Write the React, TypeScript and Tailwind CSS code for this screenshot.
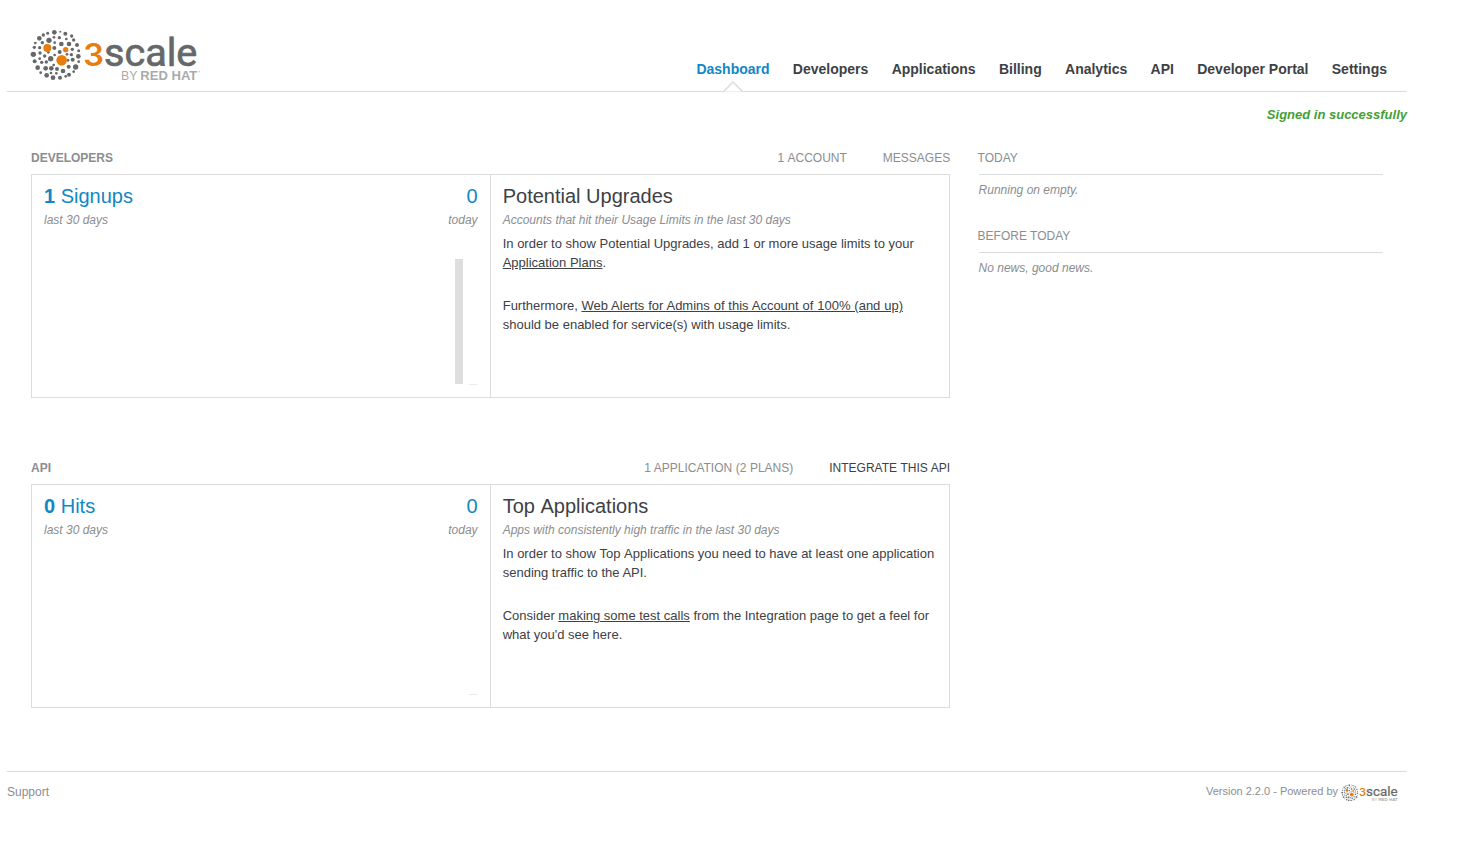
import React from "react";

// Each dot is [cx, cy, radius] in logo units (a third of a pixel).
const grayDots: number[][] = [
  [91, 25, 7], [71, 28, 4.5], [109, 23, 3], [124, 29, 6], [58, 33, 5], [143, 36, 5],
  [46, 43, 7], [90, 40, 4], [106, 41, 5], [127, 45, 4], [75, 49, 8], [149, 48, 5],
  [34, 57, 4], [55, 56, 5], [112, 60, 7], [92, 56, 4], [135, 60, 7], [159, 63, 6],
  [31, 70, 5], [47, 71, 5], [91, 72, 6], [145, 76, 5], [164, 80, 4.5], [48, 87, 5],
  [28, 91, 8], [73, 85, 4], [107, 84, 6], [129, 91, 4], [142, 92, 5], [163, 97, 7],
  [62, 96, 5], [92, 93, 4], [80, 104, 8], [47, 104, 4], [32, 112, 6], [146, 107, 6],
  [132, 109, 4], [53, 115, 5], [67, 114, 5], [164, 113, 4], [155, 129, 8], [134, 128, 6],
  [41, 131, 7], [65, 133, 7], [82, 133, 7], [99, 135, 6], [89, 123, 4], [117, 141, 7],
  [50, 146, 4], [68, 154, 7], [81, 147, 4], [97, 148, 4], [87, 161, 7], [108, 161, 6],
  [125, 157, 4], [135, 152, 6], [149, 143, 4],
];

function Logo({ className }: { className: string }) {
  return (
    <svg className={className} viewBox="18 15 513 159" role="img" aria-label="3scale by Red Hat">
      {grayDots.map(([x, y, r]) => (
        <circle key={`${x}-${y}`} cx={x} cy={y} r={r} fill="#666769" />
      ))}
      <circle cx="70" cy="72" r="12" fill="#e87d0d" />
      <circle cx="125" cy="77" r="8" fill="#e87d0d" />
      <circle cx="113" cy="109" r="16" fill="#e87d0d" />
      <text x="178" y="125" fontFamily="Inter, sans-serif" fontWeight="600" fontSize="92" textLength="62" lengthAdjust="spacingAndGlyphs" fill="#e87d0d">3</text>
      <text x="240" y="125" fontFamily="Roboto, sans-serif" fontWeight="400" fontSize="114" textLength="280" lengthAdjust="spacingAndGlyphs" fill="#666769" stroke="#666769" strokeWidth="2">scale</text>
      <text x="291" y="167" fontFamily="Liberation Sans, sans-serif" fontSize="36" textLength="49" lengthAdjust="spacingAndGlyphs" fill="#aaa">BY</text>
      <text x="349" y="167" fontFamily="Liberation Sans, sans-serif" fontWeight="700" fontSize="36" textLength="171" lengthAdjust="spacingAndGlyphs" fill="#aaa">RED HAT</text>
      <circle cx="526" cy="143" r="2" fill="#bbb" />
    </svg>
  );
}

const navItems = ["Developers", "Applications", "Billing", "Analytics", "API", "Developer Portal", "Settings"];

function Header() {
  return (
    <header className="flex h-[92px] items-start justify-between border-b border-[#dcdcdc] pl-[23px] pr-5">
      <Logo className="mt-[29px] h-[53px] w-[171px]" />
      <nav className="mt-[59px] flex gap-[23.3px] text-[14px] leading-5 font-bold">
        <a className="relative text-[#1287c6]">
          Dashboard
          <svg className="absolute top-[22px] left-1/2 h-[11px] w-5 -translate-x-1/2" viewBox="0 0 20 11">
            <path d="M0.5 10.5 10 1l9.5 9.5" fill="#fff" stroke="#dcdcdc" strokeWidth="1.5" />
          </svg>
        </a>
        {navItems.map((item) => (
          <a key={item}>{item}</a>
        ))}
      </nav>
    </header>
  );
}

interface PanelProps {
  title: string;
  links: React.ReactNode;
  count: string;
  label: string;
  barHeights: number[];
  heading: React.ReactNode;
  subtitle: string;
  children: React.ReactNode;
}

function Panel({ title, links, count, label, barHeights, heading, subtitle, children }: PanelProps) {
  return (
    <section>
      <div className="flex h-[25px] justify-between text-[12px] leading-[18px] text-[#8b8d8f]">
        <h2 className="font-bold">{title}</h2>
        <div className="-mr-[0.2px] flex gap-9">{links}</div>
      </div>
      <div className="flex h-[224px] w-[919px] border border-[#dcdcdc]">
        <div className="flex w-[459px] flex-col justify-between border-r border-[#dcdcdc] pt-[9px] pr-[12.4px] pb-3 pl-3">
          <div className="flex justify-between">
            <div>
              <div className="text-[20px] leading-6 text-[#1287c6]"><b>{count}</b> {label}</div>
              <div className="mt-[3px] text-[12px] leading-[18px] text-[#8b8d8f] italic">last 30 days</div>
            </div>
            <div className="text-right">
              <div className="text-[20px] leading-6 text-[#1287c6]">0</div>
              <div className="mt-[3px] text-[12px] leading-[18px] text-[#8b8d8f] italic">today</div>
            </div>
          </div>
          <div className="flex items-end justify-end gap-[6px] pr-[0.6px]">
            {barHeights.map((height, i) => (
              <div key={i} className={height > 1 ? "mb-px w-2 bg-[#dedede]" : "w-2 bg-[#eaeaea]"} style={{ height }} />
            ))}
          </div>
        </div>
        <div className="flex-1 pt-[9px] pl-[11.7px] text-[13px] leading-[19px]">
          <h3 className="text-[20px] leading-6">{heading}</h3>
          <p className="mt-[3px] text-[12px] leading-[18px] text-[#8b8d8f] italic">{subtitle}</p>
          <div className="mt-[5px] flex flex-col gap-6">{children}</div>
        </div>
      </div>
    </section>
  );
}

function NewsItem({ title, text }: { title: string; text: string }) {
  return (
    <section className="h-[78px] text-[12px] leading-[18px] text-[#8b8d8f]">
      <h2>{title}</h2>
      <p className="mt-[7px] ml-px border-t border-[#dcdcdc] pt-[6px] italic">{text}</p>
    </section>
  );
}

export default function App() {
  return (
    <div className="min-h-[843px] bg-white pl-[7px] font-['Liberation_Sans',Arial,sans-serif] text-[#3d4145]">
      <div className="w-[1400px]">
        <Header />
        <p className="mt-[13px] h-[44px] text-right text-[13px] leading-[20px] font-bold text-[#45a036] italic">
          Signed in successfully
        </p>
        <main className="flex h-[622px] pl-6">
          <div className="flex w-[919px] flex-col gap-[61px]">
            <Panel
              title="DEVELOPERS"
              links={<><a className="[word-spacing:0.66px]">1 ACCOUNT</a><a>MESSAGES</a></>}
              count="1"
              label="Signups"
              barHeights={[125, 1]}
              heading="Potential Upgrades"
              subtitle="Accounts that hit their Usage Limits in the last 30 days"
            >
              <p>In order to show Potential Upgrades, add 1 or more usage limits to your<br /><a className="underline">Application Plans</a>.</p>
              <p>Furthermore, <a className="underline [word-spacing:0.24px]">Web Alerts for Admins of this Account of 100% (and up)</a><br />should be enabled for service(s) with usage limits.</p>
            </Panel>
            <Panel
              title="API"
              links={<><a className="[word-spacing:0.22px]">1 APPLICATION (2 PLANS)</a><a className="text-[#3d4145] [word-spacing:0.33px]">INTEGRATE THIS API</a></>}
              count="0"
              label="Hits"
              barHeights={[1]}
              heading={<span className="[word-spacing:1.1px]">Top Applications</span>}
              subtitle="Apps with consistently high traffic in the last 30 days"
            >
              <p>In order to show <span className="[word-spacing:0.7px]">Top Applications</span> you need to have at least one application<br />sending traffic to the API.</p>
              <p>Consider <a className="underline">making some test calls</a> from the Integration page to get a feel for<br />what you'd see here.</p>
            </Panel>
          </div>
          <aside className="ml-[27.6px] w-[405.4px]">
            <NewsItem title="TODAY" text="Running on empty." />
            <NewsItem title="BEFORE TODAY" text="No news, good news." />
          </aside>
        </main>
        <footer className="flex justify-between border-t border-[#dcdcdc] pr-2 text-[#8b8d8f]">
          <a className="mt-[11px] text-[12px] leading-[18px]">Support</a>
          <div className="mt-[11px] flex text-[11px] leading-[17px]">
            <span>Version 2.2.0 - Powered by</span>
            <Logo className="mt-px ml-[3px] h-[18px] w-[58px]" />
          </div>
        </footer>
      </div>
    </div>
  );
}
